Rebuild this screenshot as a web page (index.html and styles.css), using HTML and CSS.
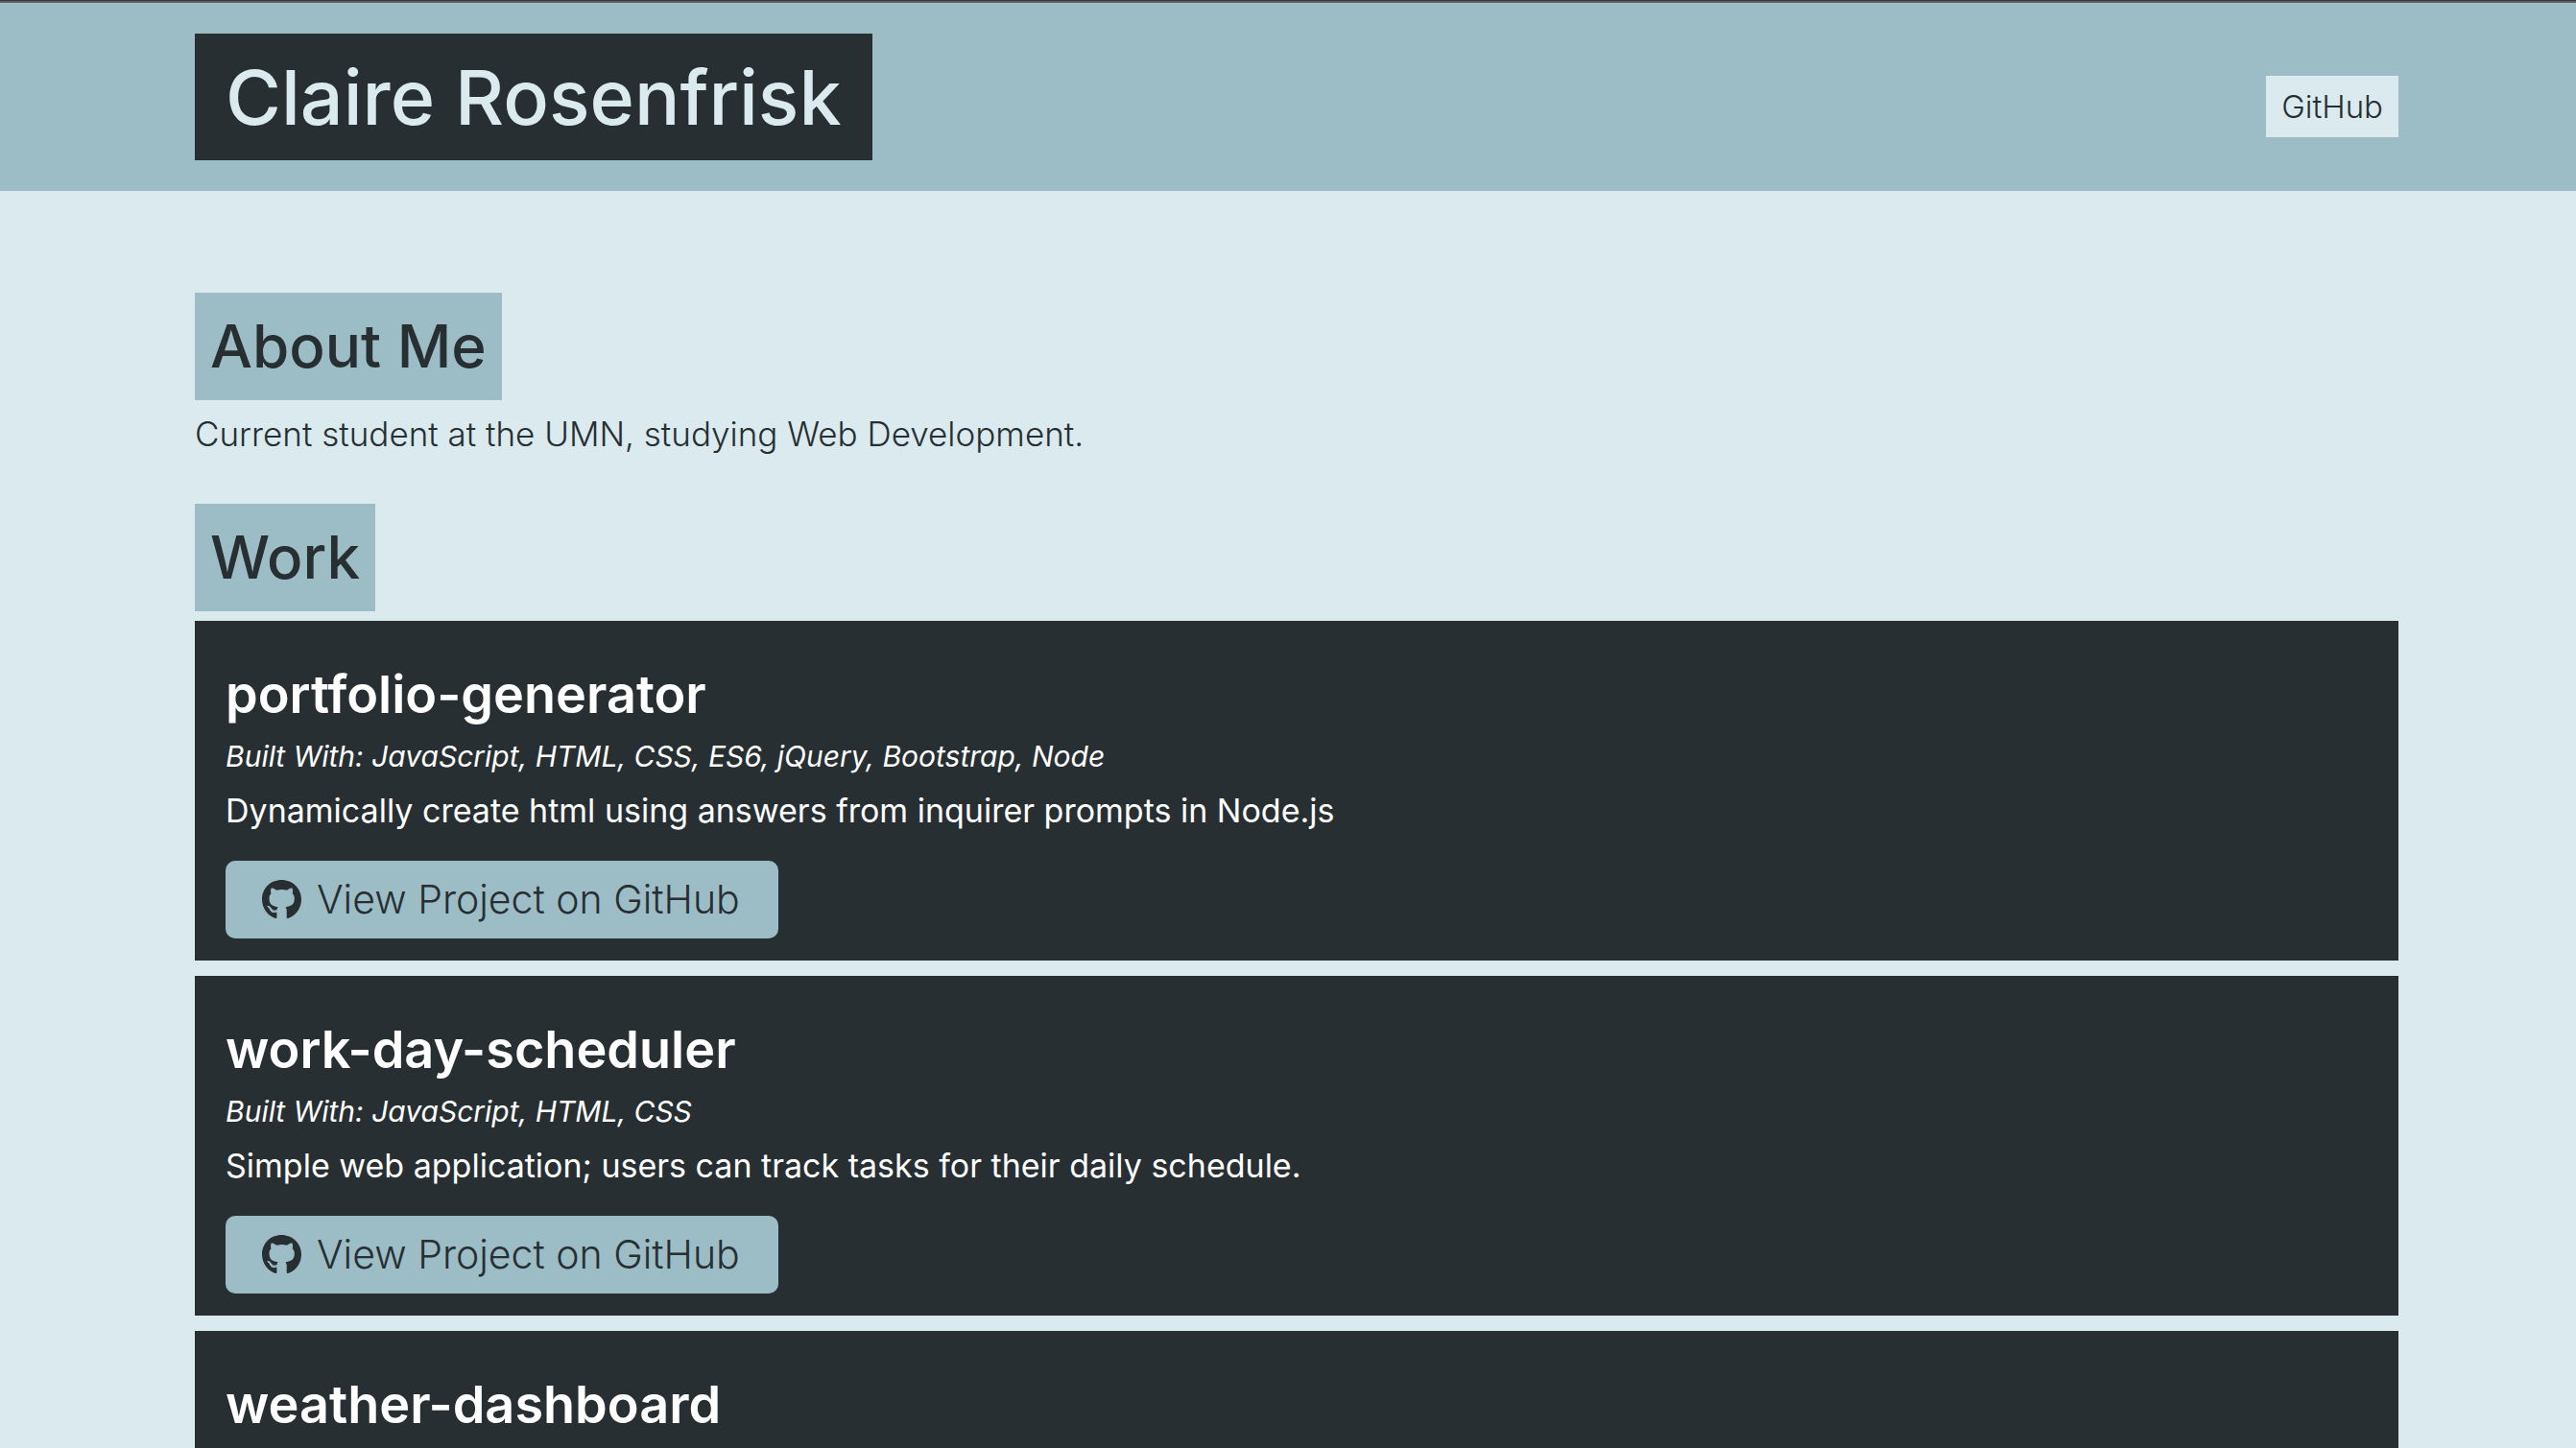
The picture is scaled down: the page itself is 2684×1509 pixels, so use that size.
FILE: index.html
```html
<!DOCTYPE html>
<html lang="en">
<head>
  <meta charset="utf-8">
  <meta name="viewport" content="width=device-width, initial-scale=1">
  <title>Claire Rosenfrisk</title>
  <link rel="stylesheet" href="styles.css">
</head>
<body>
  <svg class="sprite" aria-hidden="true">
    <symbol id="github" viewBox="0 0 496 496">
      <path d="M165.900 389.400c0 2-2.300 3.600-5.200 3.600-3.300.3-5.600-1.300-5.600-3.600 0-2 2.300-3.600 5.200-3.600 3-.3 5.600 1.300 5.600 3.600zm-31.100-4.500c-.7 2 1.300 4.300 4.300 4.900 2.600 1 5.600 0 6.200-2s-1.300-4.300-4.300-5.200c-2.600-.7-5.500.3-6.200 2.300zm44.200-1.700c-2.900.7-4.900 2.600-4.600 4.900.3 2 2.900 3.300 5.900 2.600 2.900-.7 4.900-2.600 4.600-4.600-.3-1.900-3-3.200-5.900-2.900zM244.800 0C106.100 0 0 105.300 0 244c0 110.900 69.800 205.800 169.500 239.200 12.800 2.300 17.300-5.600 17.300-12.100 0-6.200-.3-40.400-.3-61.400 0 0-70 15-84.700-29.800 0 0-11.400-29.100-27.800-36.600 0 0-22.900-15.700 1.600-15.400 0 0 24.900 2 38.600 25.800 21.900 38.600 58.600 27.500 72.900 20.900 2.300-16 8.800-27.100 16-33.700-55.900-6.200-112.300-14.300-112.300-110.500 0-27.500 7.600-41.300 23.600-58.900-2.600-6.500-11.100-33.300 2.600-67.900 20.900-6.500 69 27 69 27 20-5.600 41.500-8.500 62.800-8.500s42.800 2.900 62.800 8.500c0 0 48.100-33.600 69-27 13.700 34.700 5.200 61.400 2.600 67.900 16 17.700 25.800 31.500 25.800 58.900 0 96.500-58.900 104.200-114.800 110.500 9.200 7.900 17 22.900 17 46.400 0 33.700-.3 75.400-.3 83.600 0 6.500 4.600 14.400 17.300 12.100C428.200 449.800 496 354.900 496 244 496 105.300 383.500 0 244.800 0z"/>
    </symbol>
  </svg>

  <header class="site-header">
    <div class="container header-row">
      <h1 class="site-title">Claire Rosenfrisk</h1>
      <nav class="site-nav">
        <a class="nav-link" href="https://github.com/">GitHub</a>
      </nav>
    </div>
  </header>

  <main class="container content">
    <section class="section">
      <h2 class="section-title">About Me</h2>
      <p class="about-text">Current student at the UMN, studying Web Development.</p>
    </section>

    <section class="section">
      <h2 class="section-title">Work</h2>
      <div class="projects">
        <article class="project">
          <h3 class="project-title">portfolio-generator</h3>
          <p class="project-stack">Built With: JavaScript, HTML, CSS, ES6, jQuery, Bootstrap, Node</p>
          <p class="project-text">Dynamically create html using answers from inquirer prompts in Node.js</p>
          <a class="button" href="#portfolio-generator"><svg class="icon" aria-hidden="true"><use href="#github"/></svg>View Project on GitHub</a>
        </article>
        <article class="project">
          <h3 class="project-title">work-day-scheduler</h3>
          <p class="project-stack">Built With: JavaScript, HTML, CSS</p>
          <p class="project-text">Simple web application; users can track tasks for their daily schedule.</p>
          <a class="button" href="#work-day-scheduler"><svg class="icon" aria-hidden="true"><use href="#github"/></svg>View Project on GitHub</a>
        </article>
        <article class="project">
          <h3 class="project-title">weather-dashboard</h3>
        </article>
      </div>
    </section>
  </main>
</body>
</html>
```
FILE: styles.css
```css
:root {
  --light: #daeaef;
  --mid: #9dbdc6;
  --dark: #272f32;
}

* {
  box-sizing: border-box;
  margin: 0;
}

body {
  background: var(--light);
  color: var(--dark);
  font-family: Inter, "Liberation Sans", sans-serif;
  font-size: 34px;
  font-weight: 300;
  line-height: 54px;
}

/* Two-tone rule along the top edge */
body::before {
  content: "";
  display: block;
  height: 2px;
  background: #5f5d62;
  border-top: 1px solid #38363b;
}

.sprite {
  display: none;
}

.container {
  padding-left: 203px;
  padding-right: 185px;
}

.site-header {
  background: var(--mid);
  padding: 32px 0;
}

.header-row {
  display: flex;
  flex-wrap: wrap;
  justify-content: space-between;
  align-items: flex-end;
}

.site-title {
  background: var(--dark);
  color: var(--light);
  padding: 16px 32px;
  font-size: 79px;
  font-weight: 500;
  line-height: 100px;
}

.site-nav {
  display: flex;
  padding-bottom: 24px;
}

.nav-link {
  background: var(--light);
  color: var(--dark);
  padding: 8px 16px;
  font-size: 33px;
  line-height: 48px;
  text-decoration: none;
}

.content {
  display: flex;
  flex-direction: column;
  gap: 46px;
  padding-top: 106px;
  padding-bottom: 48px;
}

.section {
  display: flex;
  flex-direction: column;
  align-items: flex-start;
}

.section-title {
  background: var(--mid);
  padding: 16px;
  font-size: 62px;
  font-weight: 500;
  line-height: 80px;
}

.about-text {
  margin-top: 8px;
  font-size: 35px;
}

.projects {
  display: flex;
  flex-direction: column;
  gap: 16px;
  align-self: stretch;
  margin-top: 10px;
}

.project {
  display: flex;
  flex-direction: column;
  align-items: flex-start;
  padding: 43px 32px 23px;
  background: var(--dark);
  color: #fff;
  font-weight: 400;
}

.project-title {
  font-size: 54px;
  font-weight: 600;
  line-height: 68px;
}

.project-stack {
  margin-top: 6px;
  font-size: 30px;
  font-style: italic;
  line-height: 48px;
}

.project-text {
  margin-top: 6px;
}

.button {
  display: inline-flex;
  align-items: center;
  gap: 16px;
  margin-top: 25px;
  padding: 13px 40px 13px 38px;
  border-radius: 10px;
  background: var(--mid);
  color: var(--dark);
  font-size: 41px;
  font-weight: 300;
  line-height: 55px;
  text-decoration: none;
}

.icon {
  width: 41px;
  height: 41px;
  fill: currentColor;
}
```
